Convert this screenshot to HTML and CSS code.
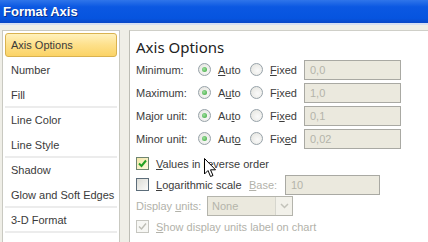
FILE: index.html
```html
<!DOCTYPE html>
<html lang="en">
<head>
    <meta charset="UTF-8">
    <title>Format Axis</title>
    <link rel="stylesheet" href="styles.css">
</head>
<body>

<div class="window">
    <div class="titlebar">Format Axis</div>

    <div class="content">
        <ul class="nav">
            <li class="selected">Axis Options</li>
            <li>Number</li>
            <li class="group-end">Fill</li>
            <li>Line Color</li>
            <li class="group-end">Line Style</li>
            <li>Shadow</li>
            <li class="group-end">Glow and Soft Edges</li>
            <li class="group-end">3-D Format</li>
        </ul>

        <div class="panel">
            <h2>Axis Options</h2>

            <div class="row">
                <span class="label">Minimum:</span>
                <span class="radio on"></span><span class="opt"><u>A</u>uto</span>
                <span class="radio"></span><span class="opt fixed"><u>F</u>ixed</span>
                <span class="field">0,0</span>
            </div>
            <div class="row">
                <span class="label">Maximum:</span>
                <span class="radio on"></span><span class="opt">A<u>u</u>to</span>
                <span class="radio"></span><span class="opt fixed">F<u>i</u>xed</span>
                <span class="field">1,0</span>
            </div>
            <div class="row">
                <span class="label">Major unit:</span>
                <span class="radio on"></span><span class="opt">Au<u>t</u>o</span>
                <span class="radio"></span><span class="opt fixed">Fi<u>x</u>ed</span>
                <span class="field">0,1</span>
            </div>
            <div class="row">
                <span class="label">Minor unit:</span>
                <span class="radio on"></span><span class="opt">Aut<u>o</u></span>
                <span class="radio"></span><span class="opt fixed">Fix<u>e</u>d</span>
                <span class="field">0,02</span>
            </div>

            <div class="check-row first">
                <span class="check on"><svg viewBox="0 0 11 11"><path d="M2 5.5 L4.5 8 L9 2.5" /></svg></span>
                <span><u>V</u>alues in reverse order</span>
            </div>
            <div class="check-row">
                <span class="check"></span>
                <span class="log"><u>L</u>ogarithmic scale</span>
                <span class="muted base"><u>B</u>ase:</span>
                <span class="field base-field">10</span>
            </div>
            <div class="check-row">
                <span class="muted units">Display <u>u</u>nits:</span>
                <span class="select">None<span class="arrow"><svg viewBox="0 0 9 6"><path d="M1 1 L4.5 4.5 L8 1" /></svg></span></span>
            </div>
            <div class="check-row">
                <span class="check disabled"><svg viewBox="0 0 11 11"><path d="M2 5.5 L4.5 8 L9 2.5" /></svg></span>
                <span class="muted"><u>S</u>how display units label on chart</span>
            </div>

            <div class="bottom">
                <span class="bottom-line"></span>
                <span class="bottom-box"></span>
            </div>
        </div>
    </div>

    <!-- mouse pointer over the dialog -->
    <svg class="cursor" width="13" height="21" viewBox="0 0 13 21">
        <path d="M0.5 0.5 L0.5 16 L4 12.5 L6.5 18.5 L9 17.5 L6.5 11.8 L11.5 11.8 Z" />
    </svg>
</div>

</body>
</html>
```

FILE: styles.css
```css
body {
    margin: 0;
    font-family: "Liberation Sans", Arial, sans-serif;
    font-size: 11px;
    color: #3c3c3c;
    background: #efeee7;
}
.window {
    position: relative;
    width: 428px;
    height: 242px;
    overflow: hidden;
    background: #efeee7;
}
.titlebar {
    height: 23px;
    padding-left: 3px;
    border-bottom: 2px solid #d6dff2;
    background: linear-gradient(#2f75ea, #0b58e2 30%, #0654df 80%, #0a47c6);
    color: #fff;
    font-weight: bold;
    font-size: 13px;
    line-height: 23px;
    text-shadow: 1px 1px 0 #0a2f8a;
}
.content {
    display: flex;
    gap: 9px;
    padding: 5px 0 0 2px;
}

/* left category list */
.nav {
    list-style: none;
    margin: 0;
    padding: 2px 1px 0;
    width: 114px;
    height: 220px;
    background: #fff;
    border: 1px solid #c9c9c1;
}
.nav li {
    height: 25px;
    line-height: 25px;
    padding-left: 6px;
    margin: 0 1px;
    color: #3a3a3a;
    box-sizing: border-box;
    white-space: nowrap;
}
.nav li.group-end {
    border-bottom: 2px solid #ececec;
}
.nav li.selected {
    height: 24px;
    line-height: 22px;
    background: linear-gradient(#fff1bd, #fde08a 50%, #fbd366);
    border: 1px solid #d9b24f;
    border-radius: 3px;
    padding-left: 5px;
    margin-bottom: 1px;
}

/* right options panel */
.panel {
    flex: 1;
    height: 214px;
    padding: 0 0 0 6px;
    background: #fff;
    border-left: 1px solid #bdbdb5;
    border-top: 1px solid #cfcfc8;
    white-space: nowrap;
}
.panel h2 {
    margin: 5px 0 0;
    font-family: "Noto Sans", sans-serif;
    font-weight: normal;
    font-size: 15px;
    line-height: 22px;
    color: #222;
}
.row {
    display: flex;
    align-items: center;
    height: 23px;
}
.label {
    width: 62px;
}
.opt {
    margin-left: 7px;
    width: 32px;
}
.opt.fixed {
    width: 33px;
}
.radio {
    flex: none;
    width: 11px;
    height: 11px;
    border: 1px solid #97a2a9;
    border-radius: 50%;
    background: radial-gradient(circle at 60% 60%, #fafafa, #e2e2dc);
    position: relative;
}
.radio.on::after {
    content: "";
    position: absolute;
    left: 3px;
    top: 3px;
    width: 5px;
    height: 5px;
    border-radius: 50%;
    background: radial-gradient(circle at 40% 40%, #9fe09f, #36a336);
}
.field {
    width: 90px;
    height: 18px;
    margin-left: 1px;
    padding-left: 5px;
    line-height: 18px;
    border: 1px solid #a9a9a3;
    background: #ebe9de;
    color: #b4b4aa;
}

.check-row {
    display: flex;
    align-items: center;
    height: 21px;
}
.check-row.first {
    margin-top: 3px;
}
.check {
    flex: none;
    width: 11px;
    height: 11px;
    margin-right: 7px;
    border: 1px solid #5c6d7a;
    background: linear-gradient(135deg, #dcdcd6, #fbfbfa);
}
.check svg {
    display: block;
    width: 11px;
    height: 11px;
}
.check path {
    fill: none;
    stroke: #22a022;
    stroke-width: 2;
}
.check.on {
    background: linear-gradient(135deg, #f3e7a8, #fdf9e0);
    border-color: #6f8570;
}
.check.disabled {
    border-color: #c6c6c0;
    background: #f7f7f4;
}
.check.disabled path {
    stroke: #bdbdb5;
    stroke-width: 1.4;
}
.muted {
    color: #b2b2aa;
}
.log {
    flex: none;
    width: 93px;
}
.base {
    width: 35px;
}
.base-field {
    width: 88px;
}
.units {
    width: 71px;
}
.select {
    position: relative;
    width: 80px;
    height: 18px;
    padding-left: 4px;
    line-height: 18px;
    border: 1px solid #b4b4ac;
    background: #ebe9de;
    color: #b4b4aa;
}
.select .arrow {
    position: absolute;
    right: 0;
    top: 0;
    width: 16px;
    height: 18px;
    border-left: 1px solid #d6d6ce;
    background: #f2f1ea;
}
.select .arrow svg {
    display: block;
    width: 9px;
    height: 6px;
    margin: 6px auto 0;
}
.select .arrow path {
    fill: none;
    stroke: #c2c2ba;
    stroke-width: 1.5;
}

.bottom {
    display: flex;
    align-items: flex-start;
    margin-top: 7px;
}
.bottom-line {
    width: 112px;
    margin-top: 2px;
    border-top: 1px solid #d2d2cc;
}
.bottom-box {
    width: 85px;
    height: 10px;
    border: 1px solid #b4b4ac;
}

.cursor {
    position: absolute;
    left: 204px;
    top: 158px;
}
.cursor path {
    fill: #fff;
    stroke: #000;
    stroke-width: 1;
}
```
